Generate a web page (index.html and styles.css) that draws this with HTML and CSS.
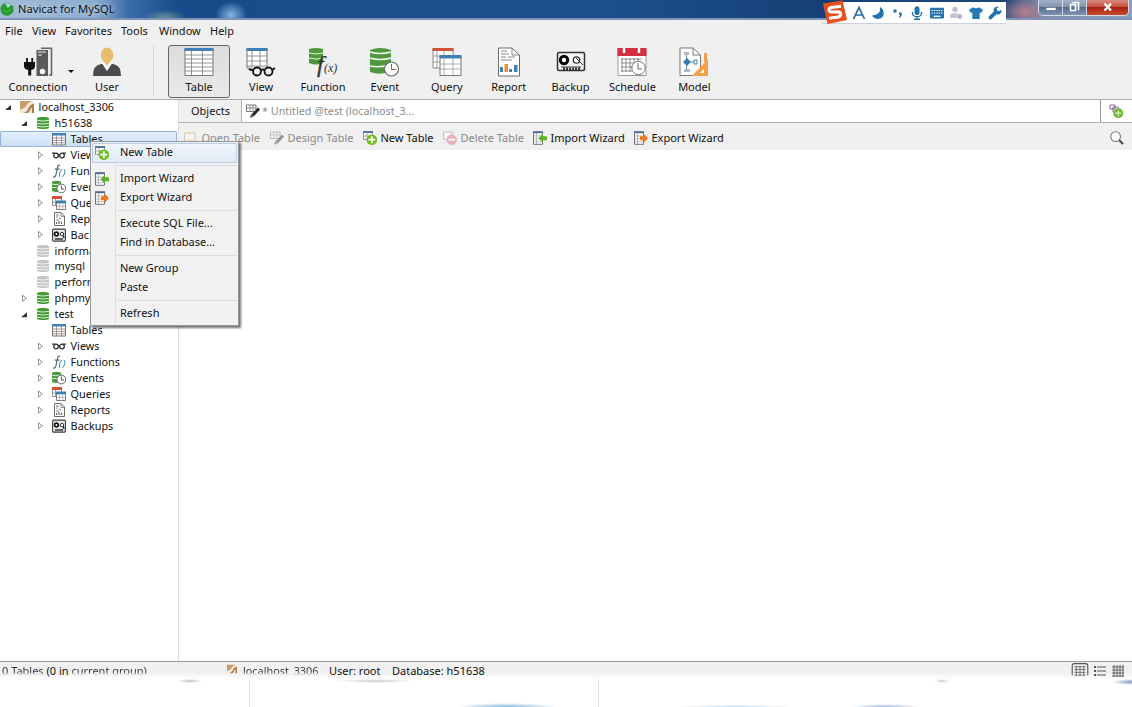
FILE: index.html
```html
<!DOCTYPE html>
<html lang="en">

<head>
    <meta charset="UTF-8">
    <meta name="viewport" content="width=device-width, initial-scale=1.0">
    <title>Navicat for MySQL</title>
    <link rel="stylesheet" href="styles.css">
</head>

<body>
    <!-- icons used more than once -->
    <svg class="sprite">
        <symbol id="i-db" viewBox="0 0 14 14">
            <path d="M1 2.5C1 .6 13 .6 13 2.5V11.5C13 13.6 1 13.6 1 11.5Z" fill="currentColor" />
            <path d="M1 4.3Q7 5.8 13 4.3M1 7.3Q7 8.8 13 7.3M1 10.2Q7 11.7 13 10.2" fill="none" stroke="#fff" stroke-width=".8" />
        </symbol>
        <symbol id="i-host" viewBox="0 0 14 14">
            <path d="M0 1H14V13H0Z" fill="#f3e6d4" />
            <path d="M0 1H12Q7 3 6 6Q4 9 0 9.5Z" fill="#c69c6c" />
            <path d="M4 13Q8 11 9 7Q11 4 14 3.5V13H12V7L8 13Z" fill="#ad7d4c" />
        </symbol>
        <symbol id="i-table" viewBox="0 0 14 14">
            <path d="M.5 1.5H13.5V13H.5Z" fill="#fff" stroke="#77716d" />
            <path d="M0 1H14V3.5H0Z" fill="#3e83bd" />
            <path d="M4.5 3V13M9.5 3V13M1 6H13M1 8.4H13M1 10.8H13" stroke="#8b8580" stroke-width=".8" />
        </symbol>
        <symbol id="i-view" viewBox="0 0 14 14">
            <g fill="none" stroke="#302d2c" stroke-width="1.3">
                <circle cx="4" cy="7.5" r="2.3" />
                <circle cx="10" cy="7.5" r="2.3" />
                <path d="M0 5.2H3M11 5.2H14M6.2 6.6H7.8" />
            </g>
        </symbol>
        <symbol id="i-fn" viewBox="0 0 14 14">
            <g fill="none" stroke="#4c7180">
                <path d="M8 1.6Q6.2.3 5.6 3.2L4 10.5Q3.3 13.8 1 12.9M2.7 5.2H7.5" stroke-width="1.2" />
                <path d="M9.6 5Q6.6 8.5 7.7 12.8M12 5Q14.6 8.5 10.4 12.8" stroke="#3c83a3" />
            </g>
        </symbol>
        <symbol id="i-event" viewBox="0 0 14 14">
            <path d="M0 1.5Q5 0 9 1.5V11Q4 13 0 11Z" fill="#4b9b3e" />
            <path d="M0 4Q4 5.5 8 4M0 7.5H5" stroke="#fff" stroke-width=".8" fill="none" />
            <circle cx="9.3" cy="8.5" r="4.4" fill="#fff" stroke="#5b6c59" />
            <path d="M9.3 5.5V9H12" stroke="#555" fill="none" />
        </symbol>
        <symbol id="i-query" viewBox="0 0 14 14">
            <path d="M.5 1.5H9.5V9.5H.5Z" fill="#fff" stroke="#99908a" />
            <path d="M0 0H10V3H0Z" fill="#d54f35" />
            <path d="M1 6H5M3.5 3V9" stroke="#999" />
            <path d="M4.5 5.5H13.5V13.5H4.5Z" fill="#fff" stroke="#827b78" />
            <path d="M4 4.5H14V7.3H4Z" fill="#367fb6" />
            <path d="M5 10.3H13M7.5 7V13M10.7 7V13" stroke="#aaa" stroke-width=".8" />
        </symbol>
        <symbol id="i-report" viewBox="0 0 14 14">
            <path d="M2.5.5H9L12.5 4V13.5H2.5Z" fill="#fff" stroke="#6d6a69" />
            <path d="M9 1V4.3H12M4 3H7M4 5H6M7 6.3H9M4 8H7" stroke="#77716f" fill="none" stroke-width=".9" />
            <path d="M4.5 12V10M7 12V9M9.5 12V9.7" stroke="#655e5c" stroke-width="1.2" />
        </symbol>
        <symbol id="i-backup" viewBox="0 0 14 14">
            <rect x=".6" y="1.1" width="12.8" height="12" rx="1" fill="#e8e8e8" stroke="#3a3a3a" stroke-width="1.1" />
            <circle cx="4.4" cy="6" r="1.9" fill="#fff" stroke="#161616" stroke-width="1.8" />
            <circle cx="10" cy="6" r="1.7" fill="#fff" stroke="#393939" />
            <path d="M11 7L12 10M3 11H11" stroke="#333" stroke-width="1.4" />
        </symbol>
        <symbol id="i-new" viewBox="0 0 14 14">
            <path d="M.5 1H9.5V8.5H.5Z" fill="#fff" stroke="#9b8f98" />
            <path d="M0 0H10V2H0Z" fill="#57799e" />
            <path d="M4 2V8M1 5H7" stroke="#aaa" />
            <circle cx="8.8" cy="8.7" r="5.3" fill="#6dbd1c" />
            <path d="M8.8 5.2V12.2M5.3 8.7H12.3" stroke="#fff" stroke-width="1.8" />
        </symbol>
        <symbol id="i-import" viewBox="0 0 14 14">
            <path d="M.5.8H9.5V13.3H.5Z" fill="#fff" stroke="#746f7e" />
            <path d="M0 .5H10V2.2H0Z" fill="#4b7192" />
            <path d="M3.5 2V13M1 5H9M1 8H9M1 10.7H9" stroke="#aaa" stroke-width=".8" />
            <path d="M5.5 7.2L10 2.5V5.2H14V9.2H10V12Z" fill="#5fb02a" />
        </symbol>
        <symbol id="i-export" viewBox="0 0 14 14">
            <path d="M.5.8H9.5V13.3H.5Z" fill="#fff" stroke="#746f7e" />
            <path d="M0 .5H10V2.2H0Z" fill="#4b7192" />
            <path d="M3.5 2V13M1 5H9M1 8H9M1 10.7H9" stroke="#aaa" stroke-width=".8" />
            <path d="M14 7.2L9.5 2.5V5.2H6V9.2H9.5V12Z" fill="#f4761a" />
        </symbol>
        <symbol id="i-design" viewBox="0 0 14 14">
            <path d="M.5 1H10V7.5H.5Z" fill="#fff" stroke="#777" />
            <path d="M1 4H10M4 1V7M7 1V7" stroke="#777" stroke-width=".8" />
            <path d="M13 4.5L6.5 11.5" stroke="#292929" stroke-width="3" />
            <path d="M3.8 13.8L5 10.2L7.7 12.7Z" fill="#555" />
        </symbol>
    </svg>

    <header class="titlebar">
        <svg class="app-icon" viewBox="0 0 14 14">
            <circle cx="7" cy="7.2" r="6.5" fill="#259c2c" />
            <path d="M5 1L7.8 6L12 2Z" fill="#b7d6e9" />
            <path d="M3 8Q7 12 11 7" stroke="#55bd42" fill="none" />
        </svg>
        <span class="app-title">Navicat for MySQL</span>
        <div class="window-buttons">
            <span class="win"><svg viewBox="0 0 24 14"><path d="M7 7.5H17V10.5H7Z" fill="#fff" stroke="#506078" stroke-width=".6" /></svg></span>
            <span class="win"><svg viewBox="0 0 24 14"><path d="M9.5 2.5H15.5V10.5M7.5 4.5H12.5V10.5H7.5Z" fill="none" stroke="#fff" stroke-width="1.6" /></svg></span>
            <span class="win close"><svg viewBox="0 0 24 14"><path d="M8.5 3.5L15 10.5M15 3.5L8.5 10.5" stroke="#fff" stroke-width="2.4" /></svg></span>
        </div>
    </header>

    <!-- floating input method bar -->
    <div class="ime">
        <svg class="ime-logo" viewBox="0 0 26 24">
            <path d="M1 3.5L20.5.5L25 20L5.5 24Z" fill="#e84d1c" />
            <path d="M19 6.3L9.5 7.5Q6.5 8 7 10.3Q7.3 12 10 12L16 11.9Q19 12 18.6 14.5Q18.2 17 15 17.3L7 18.3" fill="none" stroke="#fff" stroke-width="3.1" />
        </svg>
        <svg viewBox="0 0 14 14"><path d="M1.5 13L7 1.5L12.5 13M3.8 9H10.2" fill="none" stroke="#276b9b" stroke-width="1.7" /></svg>
        <svg viewBox="0 0 14 14"><path d="M9 1Q10 9 1 9.6Q3 13 7 13Q12 12.5 12.7 8Q13 3 9 1Z" fill="#2672aa" /></svg>
        <svg viewBox="0 0 14 14"><circle cx="4" cy="5" r="1.8" fill="#2672aa" /><path d="M8 6.5H10.8V9Q10.5 11 8.5 12L8 11Q9 10.3 9 9H8Z" fill="#2672aa" /></svg>
        <svg viewBox="0 0 14 14"><rect x="4.5" y=".3" width="5" height="8.7" rx="2.5" fill="#2672aa" /><path d="M2.5 6V7.5Q3 10.7 7 10.7Q11 10.7 11.5 7.5V6M7 11V13M4 13.2H10" fill="none" stroke="#2672aa" stroke-width="1.4" /></svg>
        <svg viewBox="0 0 14 14"><rect y="1.8" width="14" height="10.8" rx="1" fill="#2672aa" /><path d="M1.5 4.5H12.5M1.5 7H12.5" stroke="#fff" stroke-width="1.2" stroke-dasharray="1.4 1" /><path d="M3.5 10.3H10.5" stroke="#fff" stroke-width="1.3" /></svg>
        <svg viewBox="0 0 14 14"><circle cx="6" cy="3.4" r="2.7" fill="#bbbfd2" /><path d="M1 12V9Q2 7 6 7Q10 7 11 9V12Z" fill="#c0c3d5" /><circle cx="10.7" cy="10.5" r="2.7" fill="#afb3ca" stroke="#fff" stroke-width=".6" /></svg>
        <svg viewBox="0 0 14 14"><path d="M4 1.2Q7 3.4 10 1.2L14 3.8L12.3 7L10.7 6.2V13H3.3V6.2L1.7 7L0 3.8Z" fill="#2779b5" /></svg>
        <svg viewBox="0 0 14 14"><path d="M13.3 3.8L11 5.3L8.9 4.3L8.8 2.2L11 .8Q7.5-.1 6 2.5Q5.2 4 5.8 5.6L.8 10.5Q0 12 1.2 13Q2.5 14 3.6 12.9L8.5 8.2Q11 9 12.7 7.2Q14 5.7 13.3 3.8Z" fill="#2474ad" /></svg>
    </div>

    <nav class="menubar">
        <span>File</span>
        <span>View</span>
        <span>Favorites</span>
        <span>Tools</span>
        <span>Window</span>
        <span>Help</span>
    </nav>

    <div class="toolbar">
        <div class="tool connection">
            <svg viewBox="0 0 30 30">
                <path d="M18 1.2H28.5V28H26" fill="none" stroke="#666" stroke-width="1.6" />
                <path d="M13.5 3H25V29H13.5Z" fill="#5c5a5b" />
                <path d="M15 5H23M15 8H19" stroke="#eee" stroke-width="1" />
                <circle cx="19.5" cy="24.5" r="2.7" fill="#fff" />
                <path d="M1 15H12V19Q12 22.5 8.2 23V28.5H5.2V23Q1 22.5 1 19Z" fill="#111" />
                <path d="M4 11V16M9.2 11V16" stroke="#111" stroke-width="1.8" />
            </svg>
            <span>Connection</span>
            <i class="drop"></i>
        </div>
        <div class="tool">
            <svg viewBox="0 0 30 30">
                <path d="M1 29Q1 18 9 17H21Q29 18 29 29Z" fill="#4b4b4d" />
                <path d="M10 16.5L15 24L20 16.5Z" fill="#fff" />
                <ellipse cx="15" cy="8" rx="6.3" ry="7.5" fill="#e8bd70" />
                <path d="M11 13H19L15 19Z" fill="#e8bd70" />
            </svg>
            <span>User</span>
        </div>
        <div class="divider"></div>
        <div class="tool active">
            <svg viewBox="0 0 30 30">
                <path d="M1 1.5H29V28.5H1Z" fill="#fff" stroke="#777" />
                <path d="M.5 1H29.5V4H.5Z" fill="#407fb7" />
                <path d="M7.5 4V28M18.5 4V28M1 8H29M1 12H29M1 16H29M1 20H29M1 24H29" stroke="#888" stroke-width=".9" />
            </svg>
            <span>Table</span>
        </div>
        <div class="tool">
            <svg viewBox="0 0 30 30">
                <path d="M1 1.5H21V21H1Z" fill="#fff" stroke="#777" />
                <path d="M.5 1H21.5V4H.5Z" fill="#407fb7" />
                <path d="M6 4V21M14 4V21M1 9H21M1 14H21M1 19H21" stroke="#888" stroke-width=".9" />
                <path d="M4 20.5H30V29H4Z" fill="#f0f0f0" />
                <g fill="none" stroke="#111" stroke-width="1.8"><circle cx="11" cy="24.5" r="4" /><circle cx="22.5" cy="24.5" r="4" /><path d="M3 22Q4 23 7 23M26 23L29 21M15 23Q17 22 18.5 23" /></g>
            </svg>
            <span>View</span>
        </div>
        <div class="tool">
            <svg viewBox="0 0 30 30">
                <path d="M1 2Q8 0 15 2V16Q8 19 1 16Z" fill="#50993b" />
                <path d="M1 6Q8 8 15 6M1 11Q8 13 15 11" fill="none" stroke="#e1f0dd" />
                <text x="9" y="25" class="function-letter">f</text>
                <text x="16" y="25" class="function-arg">(x)</text>
            </svg>
            <span>Function</span>
        </div>
        <div class="tool">
            <svg viewBox="0 0 30 30">
                <path d="M0 3Q10-1 21 3V24Q11 29 0 25Z" fill="#51983c" />
                <path d="M0 5Q10 8 21 5M0 11Q10 14 21 11M0 19Q10 21 18 18" fill="none" stroke="#edf7ea" stroke-width="1.4" />
                <circle cx="21.5" cy="22" r="7" fill="#fff" stroke="#666" stroke-width="1.1" />
                <path d="M21.5 17V22.5H26" fill="none" stroke="#ad5742" />
            </svg>
            <span>Event</span>
        </div>
        <div class="tool">
            <svg viewBox="0 0 30 30">
                <path d="M1 2H21V21H1Z" fill="#fff" stroke="#888" />
                <path d="M.5 1H21.5V4H.5Z" fill="#cf5239" />
                <path d="M5 4V21M12 4V21M1 9H21M1 15H21" stroke="#888" stroke-width=".8" />
                <path d="M8 9H29V28.5H8Z" fill="#fff" stroke="#777" />
                <path d="M7.5 8H29.5V11.5H7.5Z" fill="#407fb5" />
                <path d="M12 12V28M21 12V28M8 17H29M8 22H29" stroke="#999" stroke-width=".8" />
            </svg>
            <span>Query</span>
        </div>
        <div class="tool">
            <svg viewBox="0 0 30 30">
                <path d="M4.5 1H18L25.5 8V29H4.5Z" fill="#fff" stroke="#696969" />
                <path d="M18 1V8H25M7 4H13M7 7H15M7 10H12M14 10H21M7 13H18" fill="none" stroke="#888" />
                <path d="M6 20H9V25H6ZM15 22H18V25H15Z" fill="#4181a2" />
                <path d="M10.5 17H14V25H10.5Z" fill="#ef8e38" />
                <path d="M20 18H23.5V25H20Z" fill="#397fb0" />
            </svg>
            <span>Report</span>
        </div>
        <div class="tool">
            <svg viewBox="0 0 30 30">
                <rect x="1.5" y="5.5" width="27" height="18" rx="1.5" fill="#f5f5f5" stroke="#333" stroke-width="1.5" />
                <circle cx="8" cy="13" r="3.7" fill="#fff" stroke="#080808" stroke-width="3" />
                <circle cx="20.5" cy="13" r="3.2" fill="#fff" stroke="#333" stroke-width="1.3" />
                <path d="M20 11L27 18M5 20H25" stroke="#333" />
                <path d="M7 22H24" stroke="#333" stroke-width="2.8" stroke-dasharray="2 1" />
            </svg>
            <span>Backup</span>
        </div>
        <div class="tool">
            <svg viewBox="0 0 30 30">
                <path d="M1 1.5H29V28.5H1Z" fill="#fff" stroke="#999" />
                <path d="M.5 1H29.5V9H.5Z" fill="#d42e42" />
                <path d="M7 1V6M22 1V6" stroke="#fff" stroke-width="2.5" />
                <path d="M4 12H25M4 16H22M4 20H15M4 24H15M5 11V25M9 11V25M13 11V25M17 11V17M21 11V16" stroke="#777" stroke-width=".8" />
                <circle cx="21.5" cy="21" r="6.7" fill="#fff" stroke="#777" />
                <path d="M21 16V22H25" fill="none" stroke="#666" />
            </svg>
            <span>Schedule</span>
        </div>
        <div class="tool">
            <svg viewBox="0 0 30 30">
                <path d="M1 1H14L21.5 8V28.5H1Z" fill="#fff" stroke="#777" />
                <path d="M14 1V8H21" fill="none" stroke="#777" />
                <path d="M5 5H10V8H5ZM5 22H11V25H5Z" fill="#aebcca" />
                <path d="M7.5 8V22M8 15H17" stroke="#6c8ba8" />
                <path d="M8 11L12 15L8 19L4 15Z" fill="#367ab3" /><path d="M15 13H18V17H15Z" fill="#fff" stroke="#4a83a7" />
                <path d="M13 29L29 12V29Z" fill="#f4a04b" /><path d="M25 6H28V15H25Z" fill="#efa052" />
                <path d="M21 26L25 22V26Z" fill="#fff" />
            </svg>
            <span>Model</span>
        </div>
    </div>

    <div class="workspace">
        <aside class="tree">
            <div class="node"><i class="arrow open"></i><svg><use href="#i-host" /></svg>localhost_3306</div>
            <div class="node level-1"><i class="arrow open"></i><svg class="green"><use href="#i-db" /></svg>h51638</div>
            <div class="node level-2 selected"><i class="arrow none"></i><svg><use href="#i-table" /></svg>Tables</div>
            <div class="node level-2"><i class="arrow"></i><svg><use href="#i-view" /></svg>View</div>
            <div class="node level-2"><i class="arrow"></i><svg><use href="#i-fn" /></svg>Func</div>
            <div class="node level-2"><i class="arrow"></i><svg><use href="#i-event" /></svg>Even</div>
            <div class="node level-2"><i class="arrow"></i><svg><use href="#i-query" /></svg>Que</div>
            <div class="node level-2"><i class="arrow"></i><svg><use href="#i-report" /></svg>Rep</div>
            <div class="node level-2"><i class="arrow"></i><svg><use href="#i-backup" /></svg>Bac</div>
            <div class="node level-1"><i class="arrow none"></i><svg class="grey"><use href="#i-db" /></svg>informa</div>
            <div class="node level-1"><i class="arrow none"></i><svg class="grey"><use href="#i-db" /></svg>mysql</div>
            <div class="node level-1"><i class="arrow none"></i><svg class="grey"><use href="#i-db" /></svg>perform</div>
            <div class="node level-1"><i class="arrow"></i><svg class="green"><use href="#i-db" /></svg>phpmy</div>
            <div class="node level-1"><i class="arrow open"></i><svg class="green"><use href="#i-db" /></svg>test</div>
            <div class="node level-2"><i class="arrow none"></i><svg><use href="#i-table" /></svg>Tables</div>
            <div class="node level-2"><i class="arrow"></i><svg><use href="#i-view" /></svg>Views</div>
            <div class="node level-2"><i class="arrow"></i><svg><use href="#i-fn" /></svg>Functions</div>
            <div class="node level-2"><i class="arrow"></i><svg><use href="#i-event" /></svg>Events</div>
            <div class="node level-2"><i class="arrow"></i><svg><use href="#i-query" /></svg>Queries</div>
            <div class="node level-2"><i class="arrow"></i><svg><use href="#i-report" /></svg>Reports</div>
            <div class="node level-2"><i class="arrow"></i><svg><use href="#i-backup" /></svg>Backups</div>
        </aside>

        <main class="content">
            <div class="tabs">
                <span class="tab-objects">Objects</span>
                <span class="tab-query"><svg><use href="#i-design" /></svg>* Untitled @test (localhost_3...</span>
                <span class="tab-add">
                    <svg viewBox="0 0 14 14"><path d="M1 1H6V5H1ZM4 3H9V8H4Z" fill="#fff" stroke="#85628d" /><circle cx="9.3" cy="9.2" r="4.9" fill="#70b82d" /><path d="M9.3 6.2V12.2M6.3 9.2H12.3" stroke="#e6f6d9" stroke-width="1.2" /></svg>
                </span>
            </div>
            <div class="actions">
                <span class="action open-table disabled"><svg viewBox="0 0 14 14"><path d="M.5 1.5H11V10H.5Z" fill="#fff" stroke="#999" /><path d="M0 1H11V3H0Z" fill="#d7c17e" /><path d="M3 8H14L12 13H2Z" fill="#e3d6a4" /></svg>Open Table</span>
                <span class="action design-table disabled"><svg><use href="#i-design" /></svg>Design Table</span>
                <span class="action new-table"><svg><use href="#i-new" /></svg>New Table</span>
                <span class="action delete-table disabled"><svg viewBox="0 0 14 14"><path d="M.5 1H9.5V8.5H.5Z" fill="#fff" stroke="#888" /><circle cx="8.7" cy="8.7" r="5.2" fill="#d96579" /><path d="M5.5 8.7H12" stroke="#fff" stroke-width="2" /></svg>Delete Table</span>
                <span class="action import"><svg><use href="#i-import" /></svg>Import Wizard</span>
                <span class="action export"><svg><use href="#i-export" /></svg>Export Wizard</span>
                <svg class="search" viewBox="0 0 14 14"><circle cx="5.6" cy="5.6" r="4.9" fill="#f7fbfd" stroke="#76818b" stroke-width="1.1" /><path d="M9.3 9.3L13 13" stroke="#505050" stroke-width="2.3" /></svg>
            </div>
            <div class="objects"></div>
        </main>
    </div>

    <div class="context-menu">
        <div class="item hover"><svg><use href="#i-new" /></svg>New Table</div>
        <hr>
        <div class="item"><svg><use href="#i-import" /></svg>Import Wizard</div>
        <div class="item"><svg><use href="#i-export" /></svg>Export Wizard</div>
        <hr>
        <div class="item">Execute SQL File...</div>
        <div class="item">Find in Database...</div>
        <hr>
        <div class="item">New Group</div>
        <div class="item">Paste</div>
        <hr>
        <div class="item">Refresh</div>
    </div>

    <footer class="statusbar">
        <span class="count"><span class="fade">0 Tables </span>(0 in <span class="fade">current group)</span></span>
        <span class="host fade"><svg><use href="#i-host" /></svg>localhost_3306</span>
        <span class="user">User: root</span>
        <span class="database">Database: h51638</span>
        <div class="view-modes">
            <svg class="mode-on" viewBox="0 0 18 16"><path d="M.7 13V3Q.7.7 3 .7H15Q17.3.7 17.3 3V13" fill="none" stroke="#555" stroke-width="1.2" /><path d="M3 4H15M3 7H15M3 10H15M3 13H15M5 3V14M9 3V14M13 3V14" stroke="#666" stroke-width=".9" /></svg>
            <svg viewBox="0 0 14 14"><path d="M1 3H3M1 7H3M1 11H3" stroke="#555" stroke-width="2" /><path d="M4 3H13M4 7H13M4 11H13" stroke="#555" /></svg>
            <svg viewBox="0 0 14 14"><path d="M1 3H13M1 6H13M1 9H13M1 12H13M3 1V13M6 1V13M9 1V13M12 1V13" stroke="#555" stroke-width=".9" /></svg>
        </div>
    </footer>

    <div class="desktop">
        <div class="pane"></div>
        <div class="pane"></div>
        <div class="pane"></div>
    </div>
</body>

</html>
```

FILE: styles.css
```css
* {
    box-sizing: border-box;
}

body {
    margin: 0;
    width: 1132px;
    height: 707px;
    overflow: hidden;
    position: relative;
    display: flex;
    flex-direction: column;
    background: #fff;
    color: #111;
    font-family: "Noto Sans", "Open Sans", sans-serif;
    font-size: 11px;
    line-height: 16px;
    white-space: nowrap;
}

svg {
    display: block;
    width: 14px;
    height: 14px;
    flex-shrink: 0;
    overflow: visible;
}

.sprite {
    position: absolute;
    width: 0;
    height: 0;
}

.titlebar {
    height: 20px;
    flex-shrink: 0;
    display: flex;
    align-items: flex-start;
    background:
        radial-gradient(ellipse 16px 13px at 231px 15px, #86b5e2 0, transparent 100%),
        radial-gradient(ellipse 22px 7px at 165px 17px, #668d9a 0, transparent 100%),
        radial-gradient(ellipse 30px 16px at 1025px 12px, #b37e91 0, transparent 100%),
        linear-gradient(90deg, #a3bdd7 0, #8aabce 95px, #386ba8 130px, #164a88 180px, #184f8c 320px, #1b508c 600px, #163f76 830px, #1b467a 1010px, #7d91ae 1045px, #87a2bf 100%);
    border-bottom: 2px solid #8092b5;
}

.app-icon {
    margin: 2px 4px 0 0;
}

.app-title {
    margin-top: 1px;
    font-size: 11.2px;
    text-shadow: 0 0 5px #dbe8f5;
}

.window-buttons {
    display: flex;
    margin: 0 3px 0 auto;
    height: 16px;
    border: 1px solid #d5dce8;
    border-top: 0;
    border-radius: 0 0 5px 5px;
    overflow: hidden;
}

.win {
    width: 24px;
    display: flex;
    justify-content: center;
    border-right: 1px solid #d1d7e3;
    background: linear-gradient(#a3afc5 0, #8294b0 45%, #546b90 50%, #7f94b3 100%);
}

.win svg {
    width: 24px;
}

.close {
    width: 41px;
    border: 0;
    background: linear-gradient(#d98c81 0, #c64d3b 45%, #a71e12 50%, #c94e2b 100%);
}

.ime {
    position: absolute;
    left: 822px;
    top: 2px;
    width: 184px;
    height: 22px;
    display: flex;
    align-items: center;
    gap: 5.5px;
    background: linear-gradient(90deg, transparent 10px, #fff 10px);
    border-bottom: 1px solid #ccd1dc;
}

.ime svg {
    margin-top: 1px;
}

.ime .ime-logo {
    width: 26px;
    height: 24px;
    margin: -2px -2px 0 0;
}

.menubar {
    height: 23px;
    flex-shrink: 0;
    display: grid;
    grid-template-columns: 27px 33px 56px 38px 51px 40px;
    padding: 3px 0 0 5px;
    background: #f0f0f0;
}

.toolbar {
    height: 57px;
    flex-shrink: 0;
    display: flex;
    padding-top: 2px;
    background: #f0f0f0;
    border-bottom: 1px solid #aaa;
}

.tool {
    position: relative;
    width: 61.9px;
    height: 53px;
    padding-top: 1px;
    display: flex;
    flex-direction: column;
    align-items: center;
    border: 1px solid transparent;
    border-radius: 3px;
}

.tool > svg {
    width: 30px;
    height: 30px;
    margin-bottom: 2px;
}

.tool.active {
    background: linear-gradient(#dcdcdc, #eaeaea);
    border-color: #666;
}

.connection {
    width: 76px;
}

.drop {
    position: absolute;
    left: 67px;
    top: 24px;
    border: 3px solid transparent;
    border-top-color: #111;
    border-bottom: 0;
}

.divider {
    width: 1px;
    height: 51px;
    margin: 0 14.4px 0 15px;
    background: #d8d8d8;
}

.function-letter {
    font: italic 24px "Liberation Serif", serif;
    fill: #333;
    stroke: #333;
    stroke-width: .3px;
}

.function-arg {
    font: italic 12px "Liberation Serif", serif;
    fill: #333;
}

.workspace {
    height: 561px;
    flex-shrink: 0;
    display: flex;
}

.tree {
    width: 179px;
    overflow: hidden;
    border-right: 1px solid #ddd;
    font-size: 10.85px;
}

.node {
    height: 15.95px;
    padding-left: 5px;
    display: flex;
    align-items: center;
}

/* first row is tucked up against the toolbar line */
.node:first-child {
    margin-top: -.9px;
}

.node svg {
    margin: 0 5px 0 5.6px;
}

.level-1 {
    padding-left: 21px;
}

.level-2 {
    padding-left: 37px;
}

.selected {
    width: 177px;
    background: linear-gradient(#e7f0fb, #c8dff7);
    box-shadow: inset 0 0 0 1px #91b3d7;
    border-radius: 2px;
}

.arrow {
    width: 9px;
    height: 10px;
    flex-shrink: 0;
    background: #999;
    clip-path: polygon(1px 1px, 6px 5px, 1px 9px, 1px 1px, 2px 3px, 2px 7px, 4.5px 5px, 2px 3px);
}

.arrow.open {
    background: #333;
    clip-path: polygon(6px 3px, 6px 8px, 0 8px);
}

.arrow.none {
    background: none;
}

.green {
    color: #429c32;
}

.grey {
    color: #c4c4c4;
}

.content {
    flex: 1;
    display: flex;
    flex-direction: column;
}

.tabs {
    height: 23px;
    display: flex;
    border-bottom: 1px solid #b2b2b2;
    background: #f0f0f0;
}

.tab-objects {
    width: 62px;
    padding: 3px 0 0 12px;
}

.tab-query {
    flex: 1;
    display: flex;
    align-items: center;
    gap: 2px;
    padding-left: 4px;
    background: #fff;
    border-left: 1px solid #b2b2b2;
    color: #8c8c8c;
    font-size: 10.8px;
}

.tab-add {
    width: 32px;
    padding: 4px 0 0 8px;
    background: #fff;
    border-left: 1px solid #999;
}

.actions {
    height: 27px;
    display: flex;
    align-items: center;
    padding: 3px 8px 0 4.5px;
    background: #f0f0f0;
}

.action {
    display: flex;
    align-items: center;
    gap: 4px;
}

.disabled {
    color: #8a8a8a;
}

.disabled svg {
    opacity: .45;
}

.open-table {
    width: 86px;
}

.design-table {
    width: 93px;
}

.new-table {
    width: 80px;
}

.delete-table {
    width: 90px;
}

.import {
    width: 101px;
}

.search {
    margin-left: auto;
}

.objects {
    flex: 1;
    background: #fff;
}

.context-menu {
    position: absolute;
    left: 90px;
    top: 141px;
    width: 149px;
    height: 185px;
    padding: 1px;
    background: linear-gradient(90deg, #f1f1f1 24px, #ddd 24px, #ddd 25px, #f1f1f1 25px);
    border: 1px solid #979797;
    box-shadow: 2px 2px 2px rgba(0, 0, 0, .55);
}

.item {
    position: relative;
    height: 19.5px;
    padding-left: 28px;
    line-height: 18.6px;
}

.item svg {
    position: absolute;
    left: 3px;
    top: 3px;
}

.hover {
    background: linear-gradient(rgba(241, 246, 252, .8), rgba(222, 234, 248, .8));
    box-shadow: inset 0 0 0 1px #b6d0eb;
    border-radius: 2px;
}

.context-menu hr {
    height: 1px;
    margin: 2px 0 3px 25px;
    border: 0;
    background: #dcdcdc;
}

.statusbar {
    height: 18px;
    flex-shrink: 0;
    display: flex;
    padding-top: 1px;
    background: linear-gradient(#f0f0f0 0, #f1f1f1 11px, #fff 17px);
    border-top: 1px solid #999;
}

.count {
    width: 223px;
    padding-left: 2px;
}

/* the lower half of these labels disappears into the white below */
.fade {
    color: transparent;
    background: linear-gradient(#333 0, #333 9px, transparent 12px);
    background-clip: text;
}

.host {
    display: flex;
    gap: 4px;
    width: 106px;
    padding-left: 2px;
    font-size: 10.85px;
}

.host svg {
    height: 10px;
    margin-top: 1px;
}

.user {
    width: 63px;
}

.view-modes {
    display: flex;
    gap: 4px;
    margin: 1px 7px 0 auto;
}

.view-modes .mode-on {
    width: 18px;
    height: 15px;
    margin-top: -1px;
}

.desktop {
    flex: 1;
    display: grid;
    grid-template-columns: 249px 349px 1fr;
    background:
        radial-gradient(ellipse 12px 2px at 190px 2px, #bbb, transparent),
        radial-gradient(ellipse 40px 2px at 375px 2px, #ccc, transparent),
        radial-gradient(ellipse 8px 2px at 942px 2px, #ccc, transparent),
        radial-gradient(ellipse 20px 3px at 1132px 3px, #8298bf, transparent),
        radial-gradient(ellipse 50px 4px at 507px 28px, #82b8df, transparent),
        radial-gradient(ellipse 60px 2px at 735px 28px, #b8d6ee, transparent),
        radial-gradient(ellipse 35px 3px at 885px 28px, #9cb9dd, transparent),
        #fff;
}

.pane + .pane {
    border-left: 1px solid #e6e6e6;
}
```
